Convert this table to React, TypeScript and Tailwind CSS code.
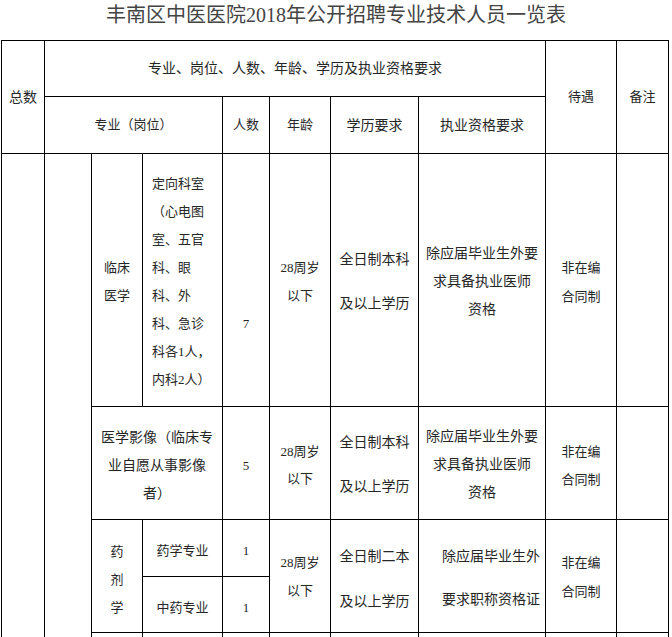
const cell = "border border-black p-0 align-middle text-center";

function Lines({ items, className = "" }: { items: string[]; className?: string }) {
  return (
    <div className={className}>
      {items.map((t, i) => (
        <div key={i}>{t}</div>
      ))}
    </div>
  );
}

export default function App() {
  return (
    <div className="h-[637px] overflow-hidden bg-white text-[#262626] font-['Liberation_Serif','Noto_Sans_CJK_SC',serif]">
      <h1 className="h-[40px] text-center text-[20px] leading-[30px] text-[#444]">
        丰南区中医医院2018年公开招聘专业技术人员一览表
      </h1>

      <table className="ml-px w-[668px] table-fixed border-collapse text-[13px]">
        <colgroup>
          <col className="w-[43px]" />
          <col className="w-[47px]" />
          <col className="w-[51px]" />
          <col className="w-[80px]" />
          <col className="w-[47px]" />
          <col className="w-[61px]" />
          <col className="w-[88px]" />
          <col className="w-[127px]" />
          <col className="w-[71px]" />
          <col className="w-[52px]" />
        </colgroup>
        <tbody>
          {/* 表头 */}
          <tr className="h-[56px]">
            <td rowSpan={2} className={`${cell} text-[14px]`}>总数</td>
            <td colSpan={7} className={`${cell} text-[14px]`}>
              专业、岗位、人数、年龄、学历及执业资格要求
            </td>
            <td rowSpan={2} className={cell}>待遇</td>
            <td rowSpan={2} className={cell}>备注</td>
          </tr>
          <tr className="h-[57px]">
            <td colSpan={3} className={cell}>专业（岗位）</td>
            <td className={cell}>人数</td>
            <td className={cell}>年龄</td>
            <td className={`${cell} text-[14px]`}>学历要求</td>
            <td className={`${cell} text-[14px]`}>执业资格要求</td>
          </tr>

          {/* 临床医学 */}
          <tr className="h-[253px]">
            <td rowSpan={5} className={cell}></td>
            <td rowSpan={5} className={cell}></td>
            <td className={`${cell} pt-[4px]`}>
              <Lines items={["临床", "医学"]} className="leading-[28px]" />
            </td>
            <td className={`${cell} pl-[9px] pt-[3px] text-left`}>
              <Lines
                items={["定向科室", "（心电图", "室、五官", "科、眼", "科、外", "科、急诊", "科各1人，", "内科2人）"]}
                className="leading-[28px]"
              />
            </td>
            <td className={`${cell} pt-[88px]`}>7</td>
            <td className={`${cell} pt-[4px]`}>
              <Lines items={["28周岁", "以下"]} className="leading-[28px]" />
            </td>
            <td className={`${cell} pt-[3px] text-[14px]`}>
              <Lines items={["全日制本科", "及以上学历"]} className="leading-[44px]" />
            </td>
            <td className={`${cell} pt-[4px] text-[14px]`}>
              <Lines items={["除应届毕业生外要", "求具备执业医师", "资格"]} className="leading-[28px]" />
            </td>
            <td className={`${cell} pt-[4px]`}>
              <Lines items={["非在编", "合同制"]} className="leading-[29px]" />
            </td>
            <td className={cell}></td>
          </tr>

          {/* 医学影像 */}
          <tr className="h-[113px]">
            <td colSpan={2} className={`${cell} pt-[5px] text-[14px]`}>
              <Lines items={["医学影像（临床专", "业自愿从事影像", "者）"]} className="leading-[28px]" />
            </td>
            <td className={`${cell} pt-[6px]`}>5</td>
            <td className={`${cell} pt-[4px]`}>
              <Lines items={["28周岁", "以下"]} className="leading-[27px]" />
            </td>
            <td className={`${cell} pt-[3px] text-[14px]`}>
              <Lines items={["全日制本科", "及以上学历"]} className="leading-[44px]" />
            </td>
            <td className={`${cell} pt-[4px] text-[14px]`}>
              <Lines items={["除应届毕业生外要", "求具备执业医师", "资格"]} className="leading-[28px]" />
            </td>
            <td className={`${cell} pt-[5px]`}>
              <Lines items={["非在编", "合同制"]} className="leading-[28px]" />
            </td>
            <td className={cell}></td>
          </tr>

          {/* 药剂学 */}
          <tr className="h-[57px]">
            <td rowSpan={2} className={`${cell} pt-[7px]`}>
              <Lines items={["药", "剂", "学"]} className="leading-[28px]" />
            </td>
            <td className={`${cell} pt-[6px]`}>药学专业</td>
            <td className={`${cell} pt-[6px]`}>1</td>
            <td rowSpan={2} className={`${cell} pt-[1px]`}>
              <Lines items={["28周岁", "以下"]} className="leading-[28px]" />
            </td>
            <td rowSpan={2} className={`${cell} pt-[6px] text-[14px]`}>
              <Lines items={["全日制二本", "及以上学历"]} className="leading-[45px]" />
            </td>
            <td rowSpan={2} className={`${cell} pl-[23px] pt-[4px] text-left text-[14px]`}>
              <Lines items={["除应届毕业生外", "要求职称资格证"]} className="leading-[43px]" />
            </td>
            <td rowSpan={2} className={`${cell} pt-[2px]`}>
              <Lines items={["非在编", "合同制"]} className="leading-[29px]" />
            </td>
            <td rowSpan={2} className={cell}></td>
          </tr>
          <tr className="h-[56px]">
            <td className={`${cell} pt-[6px]`}>中药专业</td>
            <td className={`${cell} pt-[6px]`}>1</td>
          </tr>

          <tr className="h-[60px]">
            <td className={cell}></td>
            <td className={cell}></td>
            <td className={cell}></td>
            <td className={cell}></td>
            <td className={cell}></td>
            <td className={cell}></td>
            <td className={cell}></td>
            <td className={cell}></td>
          </tr>
        </tbody>
      </table>
    </div>
  );
}
